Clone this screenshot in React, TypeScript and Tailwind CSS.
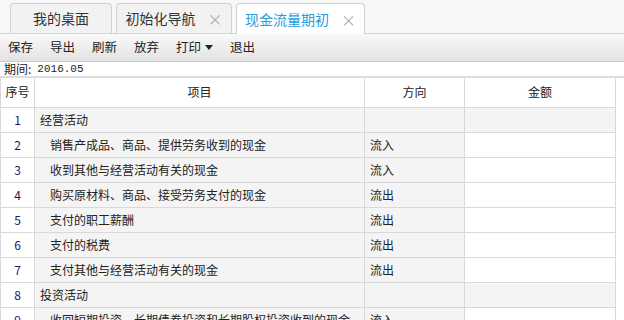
const rows: { no: number; name: string; dir: string; section?: boolean }[] = [
  { no: 1, name: "经营活动", dir: "", section: true },
  { no: 2, name: "销售产成品、商品、提供劳务收到的现金", dir: "流入" },
  { no: 3, name: "收到其他与经营活动有关的现金", dir: "流入" },
  { no: 4, name: "购买原材料、商品、接受劳务支付的现金", dir: "流出" },
  { no: 5, name: "支付的职工薪酬", dir: "流出" },
  { no: 6, name: "支付的税费", dir: "流出" },
  { no: 7, name: "支付其他与经营活动有关的现金", dir: "流出" },
  { no: 8, name: "投资活动", dir: "", section: true },
  { no: 9, name: "收回短期投资、长期债券投资和长期股权投资收到的现金", dir: "流入" },
];

function Tab({ label, active, closable, width }: { label: string; active?: boolean; closable?: boolean; width: string }) {
  return (
    <div
      className={`${width} rounded-t-[4px] border border-b-0 border-[#d0d0d0] flex items-center justify-center gap-[12px] text-[14px] ${
        active ? "bg-white text-[#2a9bd8] -mb-px h-[31px]" : "bg-[#f2f2f2] text-[#333] h-[30px]"
      }`}
    >
      <span>{label}</span>
      {closable && <span className="text-[15px] text-[#aaa] leading-none">×</span>}
    </div>
  );
}

export default function App() {
  return (
    <div className="w-[624px] h-[320px] overflow-hidden bg-white text-[#222]" style={{ fontFamily: '"Noto Sans CJK SC", "Noto Sans", sans-serif' }}>
      {/* tabs */}
      <div className="h-[34px] bg-[#f8f8f8] border-b border-[#d4d4d4] flex items-end pl-[10px] gap-[4px]">
        <Tab label="我的桌面" width="w-[102px]" />
        <Tab label="初始化导航" closable width="w-[116px]" />
        <Tab label="现金流量期初" active closable width="w-[129px]" />
      </div>

      {/* toolbar */}
      <div className="h-[28px] bg-gradient-to-b from-[#f9f9f9] to-[#e3e3e3] border-b border-[#c8c8c8] flex items-center pl-[8px] gap-[17px] text-[12.5px] text-[#222]">
        <span>保存</span>
        <span>导出</span>
        <span>刷新</span>
        <span>放弃</span>
        <span className="flex items-center gap-[4px]">
          打印
          <span className="w-0 h-0 border-x-[4px] border-x-transparent border-t-[5px] border-t-[#222]" />
        </span>
        <span>退出</span>
      </div>

      {/* period */}
      <div className="h-[16px] flex items-center pl-[4px] text-[12px] border-b-2 border-[#dcdcdc]">
        <span>期间:</span>
        <span className="ml-[6px] text-[11px]" style={{ fontFamily: '"Liberation Mono", monospace' }}>2016.05</span>
      </div>

      {/* grid */}
      <table className="table-fixed border-collapse w-[615px] text-[12px] text-[#222]">
        <colgroup>
          <col className="w-[34px]" />
          <col className="w-[330px]" />
          <col className="w-[100px]" />
          <col className="w-[151px]" />
        </colgroup>
        <thead>
          <tr className="h-[29px] bg-white">
            <th className="border border-t-0 border-[#d9d9d9] font-normal">序号</th>
            <th className="border border-t-0 border-[#d9d9d9] font-normal">项目</th>
            <th className="border border-t-0 border-[#d9d9d9] font-normal">方向</th>
            <th className="border border-t-0 border-[#d9d9d9] font-normal">金额</th>
          </tr>
        </thead>
        <tbody>
          {rows.map((r) => (
            <tr key={r.no} className="h-[25px]">
              <td className="border border-[#d9d9d9] bg-white text-center text-[#1a1a5a]">{r.no}</td>
              <td className={`border border-[#d9d9d9] bg-[#f4f4f4] whitespace-nowrap overflow-hidden ${r.section ? "pl-[5px]" : "pl-[15px]"}`}>
                {r.name}
              </td>
              <td className="border border-[#d9d9d9] bg-[#f4f4f4] pl-[5px]">{r.dir}</td>
              <td className={`border border-[#d9d9d9] ${r.section ? "bg-[#f4f4f4]" : "bg-white"}`}></td>
            </tr>
          ))}
        </tbody>
      </table>
    </div>
  );
}
